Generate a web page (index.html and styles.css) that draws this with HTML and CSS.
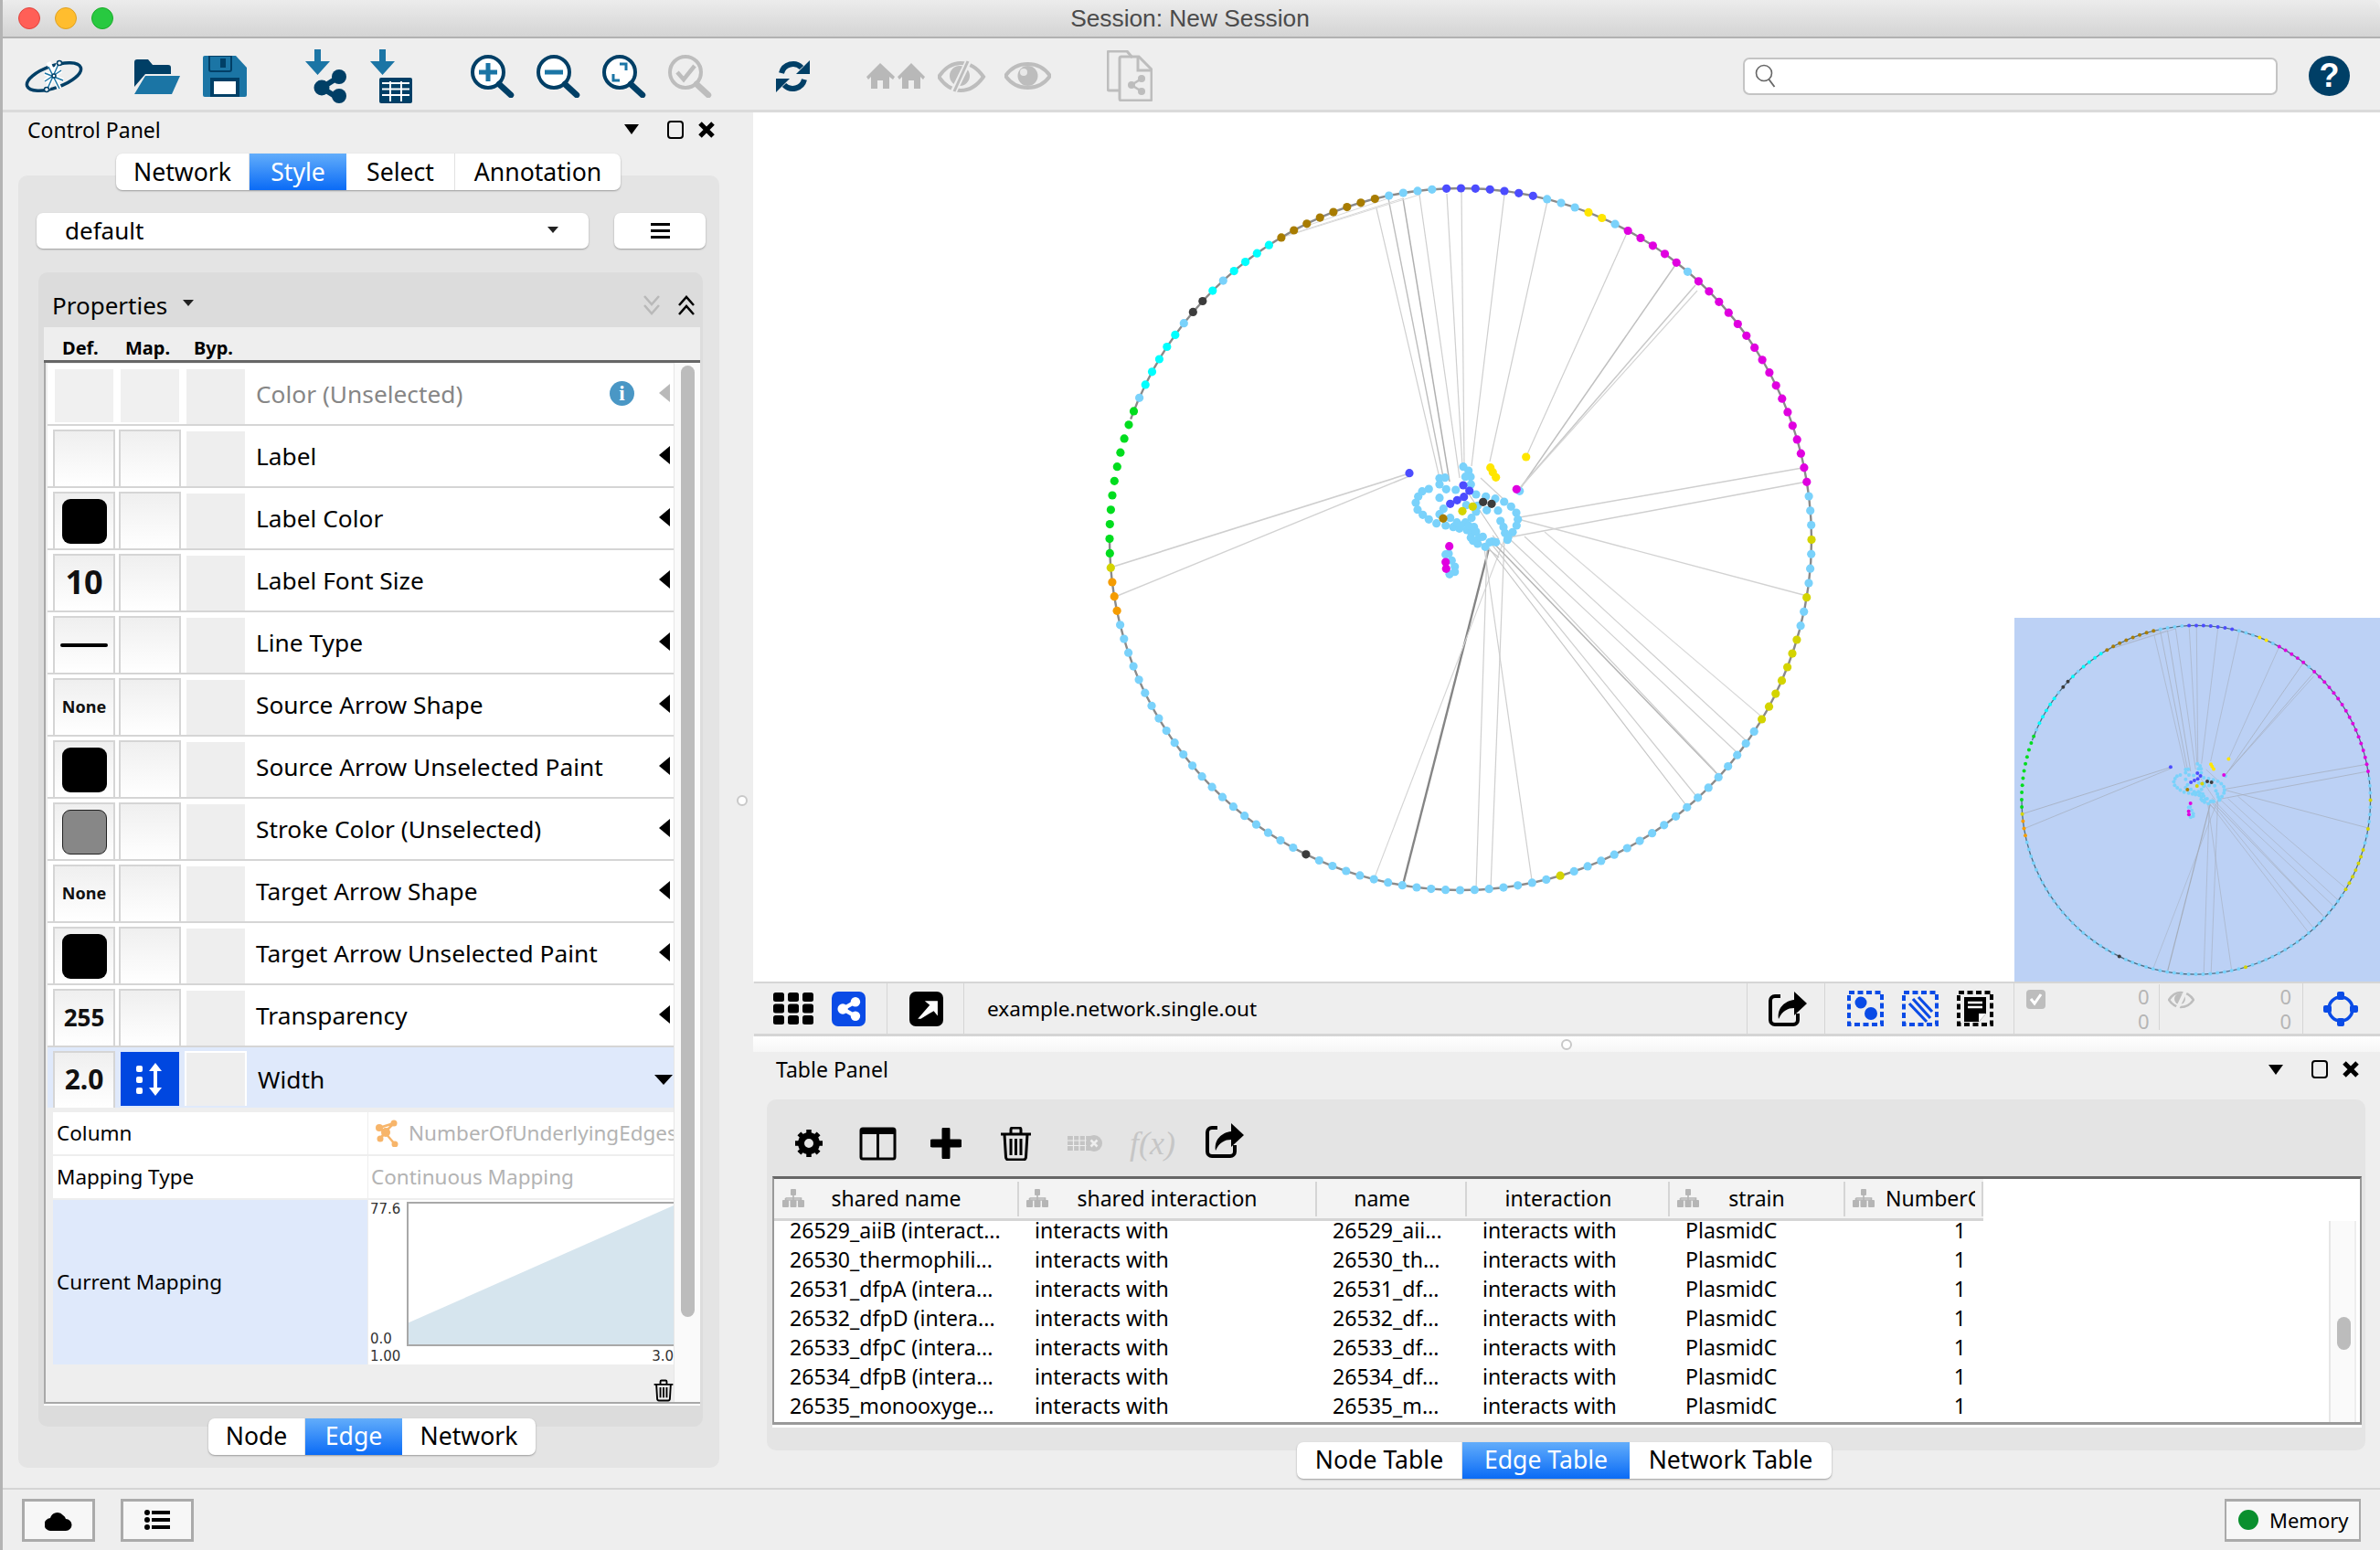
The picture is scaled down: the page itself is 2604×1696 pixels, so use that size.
FILE: index.html
```html
<!DOCTYPE html>
<html lang="en">
<head>
<meta charset="utf-8">
<title>Session: New Session</title>
<link rel="stylesheet" href="styles.css">
</head>
<body>
<svg class="defs" width="0" height="0" aria-hidden="true">
  <defs>
    <symbol id="i-export" viewBox="0 0 42 38">
      <path d="M13 5H7a5 5 0 0 0-5 5v21a5 5 0 0 0 5 5h20a5 5 0 0 0 5-5v-7" fill="none" stroke="#000" stroke-width="4"/>
      <path d="M11 30C9 18 18 10 28 9V0l14 13-14 13v-8C21 18 15 21 11 30Z" fill="#000"/>
    </symbol>
    <symbol id="i-share" viewBox="0 0 30 30">
      <path d="M23 6 7 15l16 9" fill="none" stroke="currentColor" stroke-width="5"/>
      <circle cx="23" cy="6" r="6" fill="currentColor"/><circle cx="7" cy="15" r="6.5" fill="currentColor"/><circle cx="23" cy="24" r="6" fill="currentColor"/>
    </symbol>
    <symbol id="i-tree" viewBox="0 0 24 20">
      <rect x="9" y="0" width="6" height="7" rx="1"/><path d="M12 7v5M3.5 12h17M3.5 10h17v2M3.5 10v3M20.5 10v3" stroke="#b5b5b5" stroke-width="1.6" fill="none"/>
      <rect x="0" y="12" width="7" height="8" rx="1"/><rect x="8.500" y="12" width="7" height="8" rx="1"/><rect x="17" y="12" width="7" height="8" rx="1"/>
    </symbol>
    <symbol id="i-win" viewBox="0 0 20 20"><rect x="2" y="1" width="16" height="18" rx="3" fill="none" stroke="#000" stroke-width="2"/></symbol>
    <symbol id="i-x" viewBox="0 0 20 20"><path d="M3 3l14 14M17 3 3 17" stroke="#000" stroke-width="5" fill="none"/></symbol>
    <symbol id="i-mag" viewBox="0 0 48 47">
      <circle cx="19" cy="19" r="17" fill="#fff" stroke="#003f66" stroke-width="4"/><path d="M31 32l13 12" stroke="#003f66" stroke-width="6.500" stroke-linecap="round"/>
    </symbol>
    <symbol id="i-trash" viewBox="0 0 35 37">
      <path d="M1 8h33M12 7V3a2 2 0 0 1 2-2h7a2 2 0 0 1 2 2v4M5 8l1.500 25a3 3 0 0 0 3 3h16a3 3 0 0 0 3-3L30 8M12 13v18M17.500 13v18M23 13v18" fill="none" stroke="#000" stroke-width="3"/>
    </symbol>
  </defs>
</svg>

<header class="titlebar">
  <div class="lights"><span class="light red"></span><span class="light amber"></span><span class="light green"></span></div>
  <div class="title">Session: New Session</div>
</header>

<nav class="toolbar">
  <svg class="ic-logo" viewBox="0 0 64 37"><ellipse cx="32" cy="19" rx="31" ry="12" transform="rotate(-19 32 19)" fill="none" stroke="#003f66" stroke-width="3.500"/><path d="M38 3 24 34M26 3l12 29M22 15l20 8M40 12 22 24" stroke="#fff" stroke-width="5" fill="none"/><path d="M38 3 24 34M26 8l12 24M22 15l20 8M40 12 22 24" stroke="#1b75a5" stroke-width="1.500" fill="none"/><g fill="#fff" stroke="#003f66" stroke-width="1.500"><circle cx="38" cy="4" r="2.500"/><circle cx="24" cy="33" r="2.500"/><circle cx="32" cy="18" r="2"/></g></svg>
  <div class="tgroup g-file">
    <svg class="ic-folder" viewBox="0 0 50 39"><path d="M0 4a3 3 0 0 1 3-3h12l5 6h17a3 3 0 0 1 3 3v7H12L0 31Z" fill="#003f66"/><path d="M12 19h38l-9 20H0Z" fill="#1b75a5"/></svg>
    <svg class="ic-save" viewBox="0 0 48 45"><path d="M2 0h34l12 13v30a2 2 0 0 1-2 2H2a2 2 0 0 1-2-2V2a2 2 0 0 1 2-2Z" fill="#1b75a5"/><path d="M7 0h24v15a2 2 0 0 1-2 2H9a2 2 0 0 1-2-2Z" fill="none" stroke="#003f66" stroke-width="2"/><rect x="19" y="3" width="6" height="10" fill="#003f66"/><rect x="8" y="24" width="32" height="21" fill="#003f66"/><rect x="12" y="28" width="24" height="14" fill="#fff"/></svg>
  </div>
  <div class="tgroup g-import">
    <svg class="ic-import" viewBox="0 0 46 59"><path d="M10 0h7v13h10L13.500 28 0 13h10Z" fill="#1b75a5"/><path d="M37 30 18 42l19 12" fill="none" stroke="#003f66" stroke-width="6"/><circle cx="37" cy="30" r="8" fill="#003f66"/><circle cx="18" cy="42" r="8.500" fill="#003f66"/><circle cx="37" cy="51" r="8" fill="#003f66"/></svg>
    <svg class="ic-import" viewBox="0 0 46 59"><path d="M10 0h7v13h10L13.500 28 0 13h10Z" fill="#1b75a5"/><rect x="10" y="31" width="36" height="28" rx="2" fill="#003f66"/><path d="M13 37h30M13 43.500h30M13 50h30M22 35v22M34 35v22" stroke="#fff" stroke-width="2" fill="none"/></svg>
  </div>
  <div class="tgroup g-zoom">
    <svg class="ic-mag"><use href="#i-mag"/><path d="M19 9v20M9 19h20" stroke="#1b75a5" stroke-width="5"/></svg>
    <svg class="ic-mag"><use href="#i-mag"/><path d="M9 19h20" stroke="#1b75a5" stroke-width="5"/></svg>
    <svg class="ic-mag"><use href="#i-mag"/><path d="M12 21v7h7M26 17v-7h-7" fill="none" stroke="#1b75a5" stroke-width="3"/></svg>
    <svg class="ic-mag" viewBox="0 0 48 47"><circle cx="19" cy="19" r="17" fill="none" stroke="#bdbdbd" stroke-width="4"/><path d="M31 32l13 12" stroke="#bdbdbd" stroke-width="6.500" stroke-linecap="round"/><path d="M10 19l7 8 12-15" fill="none" stroke="#bdbdbd" stroke-width="4.500"/></svg>
  </div>
  <svg class="ic-refresh" viewBox="0 0 37 35"><path d="M6 14A13 13 0 0 1 28 8" fill="none" stroke="#003f66" stroke-width="6"/><path d="M37 0v15H22Z" fill="#003f66"/><path d="M31 21A13 13 0 0 1 9 27" fill="none" stroke="#003f66" stroke-width="6"/><path d="M0 35V20h15Z" fill="#003f66"/></svg>
  <div class="tgroup g-vis">
    <svg class="ic-home" viewBox="0 0 64 28"><g fill="#b8b8b8"><path d="M15 0 31 15l-2 3-4-3v13h-7v-9h-6v9H5V15l-3 3-2-3Z"/><path d="M49 0 64 15l-2 3-3-3v13h-7v-9h-6v9h-7V15l-3 3-2-3Z"/></g></svg>
    <svg class="ic-hide" viewBox="0 0 59 35"><path d="M1 18C8 8 16 3 25 3s18 5 25 15c-7 10-16 15-25 15S8 28 1 18Z" fill="none" stroke="#bdbdbd" stroke-width="4"/><circle cx="24" cy="17" r="11" fill="#bdbdbd"/><path d="M34 0 17 35" stroke="#eee" stroke-width="7"/><path d="M33 1 18 34" stroke="#bdbdbd" stroke-width="3"/></svg>
    <svg class="ic-eye" viewBox="0 0 51 30"><path d="M1 15C8 5 16 2 25.500 2S43 5 50 15c-7 10-15 13-24.500 13S8 25 1 15Z" fill="none" stroke="#bdbdbd" stroke-width="4"/><circle cx="25.500" cy="15" r="11" fill="#bdbdbd"/><circle cx="21" cy="11" r="4" fill="#e8e8e8"/></svg>
  </div>
  <svg class="ic-doc" viewBox="0 0 50 56"><path d="M14 44H3a2 2 0 0 1-2-2V3a2 2 0 0 1 2-2h19l6 7" fill="none" stroke="#bdbdbd" stroke-width="3"/><path d="M14 9a2 2 0 0 1 2-2h19l14 14v32a2 2 0 0 1-2 2H16a2 2 0 0 1-2-2Z" fill="none" stroke="#bdbdbd" stroke-width="3"/><path d="M34 8v14h14" fill="none" stroke="#bdbdbd" stroke-width="3"/><path d="M38 31 27 38l11 7" fill="none" stroke="#bdbdbd" stroke-width="2.500"/><circle cx="38" cy="31" r="4" fill="#bdbdbd"/><circle cx="27" cy="38" r="4" fill="#bdbdbd"/><circle cx="38" cy="45" r="4" fill="#bdbdbd"/></svg>
  <div class="search"><svg class="ic-search" viewBox="0 0 24 26"><circle cx="10" cy="10" r="8.500" fill="none" stroke="#666" stroke-width="1.600"/><path d="M15.500 17l6 8" stroke="#666" stroke-width="1.800"/></svg></div>
  <div class="help">?</div>
</nav>

<main class="main">
  <section class="left">
    <div class="panel-head">
      <span class="panel-title">Control Panel</span>
      <span class="tri-down"></span>
      <svg class="win-ic"><use href="#i-win"/></svg>
      <svg class="win-x"><use href="#i-x"/></svg>
    </div>
    <div class="tabs tabs-top"><span class="tab t-network">Network</span><span class="tab active t-style">Style</span><span class="tab t-select">Select</span><span class="tab t-annot">Annotation</span></div>
    <div class="style-panel">
      <div class="style-top">
        <div class="combo"><span>default</span><span class="caret"></span></div>
        <div class="menu-btn"><span class="burger"></span></div>
      </div>
      <div class="props">
        <div class="props-head">
          <span class="props-title">Properties</span><span class="caret caret-props"></span>
          <svg class="chev chev-down" viewBox="0 0 20 24"><path d="M2 2l8 9 8-9M2 12l8 9 8-9" fill="none" stroke="#b9b9b9" stroke-width="2.500"/></svg>
          <svg class="chev chev-up" viewBox="0 0 20 24"><path d="M2 22l8-9 8 9M2 12l8-9 8 9" fill="none" stroke="#000" stroke-width="2.500"/></svg>
        </div>
        <div class="cols"><span class="col-def">Def.</span><span class="col-map">Map.</span><span class="col-byp">Byp.</span></div>
        <div class="props-body">
          <div class="rows">
            <div class="row row-off"><span class="cell off"></span><span class="cell off"></span><span class="cell byp off-byp"></span><span class="label dim">Color (Unselected)</span><span class="info">i</span><span class="arrow dimmed"></span></div>
            <div class="row"><span class="cell"></span><span class="cell"></span><span class="cell byp"></span><span class="label">Label</span><span class="arrow"></span></div>
            <div class="row"><span class="cell"><span class="swatch"></span></span><span class="cell"></span><span class="cell byp"></span><span class="label">Label Color</span><span class="arrow"></span></div>
            <div class="row"><span class="cell"><b class="v36">10</b></span><span class="cell"></span><span class="cell byp"></span><span class="label">Label Font Size</span><span class="arrow"></span></div>
            <div class="row"><span class="cell"><span class="line"></span></span><span class="cell"></span><span class="cell byp"></span><span class="label">Line Type</span><span class="arrow"></span></div>
            <div class="row"><span class="cell"><b class="v18">None</b></span><span class="cell"></span><span class="cell byp"></span><span class="label">Source Arrow Shape</span><span class="arrow"></span></div>
            <div class="row"><span class="cell"><span class="swatch"></span></span><span class="cell"></span><span class="cell byp"></span><span class="label">Source Arrow Unselected Paint</span><span class="arrow"></span></div>
            <div class="row"><span class="cell"><span class="swatch grey"></span></span><span class="cell"></span><span class="cell byp"></span><span class="label">Stroke Color (Unselected)</span><span class="arrow"></span></div>
            <div class="row"><span class="cell"><b class="v18">None</b></span><span class="cell"></span><span class="cell byp"></span><span class="label">Target Arrow Shape</span><span class="arrow"></span></div>
            <div class="row"><span class="cell"><span class="swatch"></span></span><span class="cell"></span><span class="cell byp"></span><span class="label">Target Arrow Unselected Paint</span><span class="arrow"></span></div>
            <div class="row"><span class="cell"><b class="v26">255</b></span><span class="cell"></span><span class="cell byp"></span><span class="label">Transparency</span><span class="arrow"></span></div>
            <div class="row row-sel"><span class="cell"><b class="v30">2.0</b></span><span class="cell cell-map"><svg class="ic-map" viewBox="0 0 30 36"><rect x="0" y="3" width="7" height="7" rx="2" fill="#fff"/><rect x="0" y="15" width="7" height="7" rx="2" fill="#fff"/><rect x="0" y="27" width="7" height="7" rx="2" fill="#fff"/><path d="M21 0l7 9h-5v18h5l-7 9-7-9h5V9h-5Z" fill="#fff"/></svg></span><span class="cell byp byp-sel"></span><span class="label">Width</span><span class="arrow-down"></span></div>
            <div class="detail">
              <div class="d-row"><div class="d-name">Column</div><div class="d-val"><svg class="ic-col" viewBox="0 0 26 30"><path d="M20 4 10 14 4 9M10 14l-5 7M10 14l11 13M4 9l16-5M5 21l6-7" stroke="#f7b56a" stroke-width="2.500" fill="none"/><circle cx="20" cy="4" r="3.500" fill="#f7b56a"/><circle cx="4" cy="9" r="4" fill="#f7b56a"/><circle cx="11" cy="14" r="5" fill="#f7b56a"/><circle cx="5" cy="21" r="3.500" fill="#f7b56a"/><circle cx="21" cy="27" r="3.500" fill="#f7b56a"/></svg><span class="clip">NumberOfUnderlyingEdges</span></div></div>
              <div class="d-row"><div class="d-name">Mapping Type</div><div class="d-val"><span class="plain">Continuous Mapping</span></div></div>
              <div class="d-row d-map">
                <div class="d-name d-cur">Current Mapping</div>
                <div class="chart">
                  <div class="chart-top">
                    <div class="axis"><span>77.6</span><span>0.0</span></div>
                    <svg class="plot" viewBox="0 0 290 156" preserveAspectRatio="none"><path d="M0 132 290 2V156H0Z" fill="#d6e5ee"/></svg>
                  </div>
                  <div class="axis-x"><span>1.00</span><span>3.0</span></div>
                </div>
              </div>
            </div>
            <div class="trash-row"><svg class="ic-trash-s"><use href="#i-trash"/></svg></div>
          </div>
          <div class="vscroll"><div class="thumb"></div></div>
        </div>
      </div>
      <div class="tabs tabs-low"><span class="tab t-node">Node</span><span class="tab active t-edge">Edge</span><span class="tab t-net2">Network</span></div>
    </div>
  </section>

  <div class="gutter"><span class="dot"></span></div>

  <section class="right">
    <div class="canvas">
      <svg class="net" viewBox="824 123 1780 951"><g id="net"></g></svg>
      <svg class="bird" viewBox="1198 189 805 801"><g id="net-bird"></g></svg>
    </div>
    <div class="netbar">
      <div class="nb nb-views">
        <svg class="ic-grid" viewBox="0 0 44 35"><g fill="#000"><rect width="12" height="10" rx="2.500"/><rect x="16" width="12" height="10" rx="2.500"/><rect x="32" width="12" height="10" rx="2.500"/><rect y="12.500" width="12" height="10" rx="2.500"/><rect x="16" y="12.500" width="12" height="10" rx="2.500"/><rect x="32" y="12.500" width="12" height="10" rx="2.500"/><rect y="25" width="12" height="10" rx="2.500"/><rect x="16" y="25" width="12" height="10" rx="2.500"/><rect x="32" y="25" width="12" height="10" rx="2.500"/></g></svg>
        <span class="sq-blue"><svg class="ic-share-w"><use href="#i-share"/></svg></span>
      </div>
      <div class="nb nb-open">
        <span class="sq-black"><svg class="ic-arrow" viewBox="0 0 24 24"><path d="M4 24 16 10l-5-4h13v15l-4-5L7 24Z" fill="#fff" transform="translate(-1 -2)"/></svg></span>
      </div>
      <div class="nb nb-name">example.network.single.out</div>
      <div class="nb nb-export"><svg class="ic-exp"><use href="#i-export"/></svg></div>
      <div class="nb nb-sel">
        <svg class="ic-sel" viewBox="0 0 40 39"><rect x="2" y="2" width="36" height="35" fill="none" stroke="#0a4be6" stroke-width="4" stroke-dasharray="6 3.500"/><circle cx="15" cy="13" r="6.500" fill="#0a4be6"/><circle cx="26" cy="25" r="7" fill="#0a4be6"/></svg>
        <svg class="ic-sel" viewBox="0 0 40 39"><rect x="2" y="2" width="36" height="35" fill="none" stroke="#0a4be6" stroke-width="4" stroke-dasharray="6 3.500"/><path d="M8 14l19 20M12 9l19 21M18 7l15 16" stroke="#0a4be6" stroke-width="3.200"/></svg>
        <svg class="ic-sel" viewBox="0 0 40 39"><rect x="2" y="2" width="36" height="35" fill="none" stroke="#000" stroke-width="4" stroke-dasharray="6 3.500"/><path d="M8 7h24v18l-8 9H8Z" fill="#000"/><path d="M12 13h16M12 18h16" stroke="#fff" stroke-width="2.500"/><path d="M24 34v-9h8" fill="#fff"/></svg>
      </div>
      <div class="nb nb-count">
        <div class="cnt"><svg class="ic-chk" viewBox="0 0 21 21"><rect width="21" height="21" rx="4" fill="#bdbdbd"/><path d="M5 10l4 5 7-10" fill="none" stroke="#fff" stroke-width="3"/></svg><div class="nums"><span>0</span><span>0</span></div></div>
        <div class="cnt cnt2"><svg class="ic-hide2" viewBox="0 0 29 21"><path d="M1 11C5 5 9 3 14 3s10 2 14 8c-4 6-9 8-14 8S5 17 1 11Z" fill="none" stroke="#bdbdbd" stroke-width="2.500"/><circle cx="13" cy="10" r="6" fill="#bdbdbd"/><path d="M20 0 10 21" stroke="#eee" stroke-width="4"/></svg><div class="nums"><span>0</span><span>0</span></div></div>
      </div>
      <div class="nb nb-fit"><svg class="ic-cross" viewBox="0 0 38 38"><circle cx="19" cy="19" r="13" fill="none" stroke="#0a4be6" stroke-width="3.500"/><g fill="#0a4be6"><rect x="15" y="0" width="8" height="9" rx="2"/><rect x="15" y="29" width="8" height="9" rx="2"/><rect x="0" y="15" width="9" height="8" rx="2"/><rect x="29" y="15" width="9" height="8" rx="2"/></g></svg></div>
    </div>
    <div class="hsplit"><span class="dot"></span></div>
    <div class="table-panel">
      <div class="panel-head head-table">
        <span class="panel-title">Table Panel</span>
        <span class="tri-down"></span>
        <svg class="win-ic"><use href="#i-win"/></svg>
        <svg class="win-x"><use href="#i-x"/></svg>
      </div>
      <div class="table-box">
        <div class="table-tools">
          <svg class="ic-gear" viewBox="0 0 30 30"><circle cx="15" cy="15" r="8.500" fill="none" stroke="#000" stroke-width="7"/><path d="M15 0v6M15 24v6M0 15h6M24 15h6M4.400 4.400l4 4M21.600 21.600l4 4M25.600 4.400l-4 4M8.400 21.600l-4 4" stroke="#000" stroke-width="5.500"/></svg>
          <svg class="ic-cols" viewBox="0 0 41 37"><rect x="2" y="2" width="37" height="33" rx="2" fill="none" stroke="#000" stroke-width="3"/><rect x="2" y="2" width="37" height="6" fill="#000"/><path d="M20.500 3v31" stroke="#000" stroke-width="3"/></svg>
          <svg class="ic-plus" viewBox="0 0 34 34"><path d="M17 2v30M2 17h30" stroke="#000" stroke-width="9" stroke-linecap="round"/></svg>
          <svg class="ic-trash"><use href="#i-trash"/></svg>
          <svg class="ic-tblx" viewBox="0 0 38 18"><rect x="0" y="1" width="26" height="16" fill="#c4c4c4"/><path d="M0 6h26M0 11.500h26M6.500 1v16M13 1v16M19.500 1v16" stroke="#eee" stroke-width="1.200"/><circle cx="29" cy="9" r="9" fill="#c4c4c4"/><path d="M25.500 5.500l7 7M32.500 5.500l-7 7" stroke="#eee" stroke-width="2.500"/></svg>
          <span class="fx">f(x)</span>
          <svg class="ic-exp"><use href="#i-export"/></svg>
        </div>
        <div class="table">
          <div class="t-inner">
            <div class="t-wrap">
              <div class="thead">
                <div class="th c1"><svg class="tree"><use href="#i-tree"/></svg><span>shared name</span></div>
                <div class="th c2"><svg class="tree"><use href="#i-tree"/></svg><span>shared interaction</span></div>
                <div class="th c3 th-plain"><span>name</span></div>
                <div class="th c4 th-plain"><span>interaction</span></div>
                <div class="th c5"><svg class="tree"><use href="#i-tree"/></svg><span>strain</span></div>
                <div class="th c6"><svg class="tree"><use href="#i-tree"/></svg><span class="th-num">NumberC</span></div>
              </div>
              <div class="tr"><span class="c1">26529_aiiB (interact...</span><span class="c2">interacts with</span><span class="c3">26529_aii...</span><span class="c4">interacts with</span><span class="c5">PlasmidC</span><span class="c6">1</span></div>
              <div class="tr"><span class="c1">26530_thermophili...</span><span class="c2">interacts with</span><span class="c3">26530_th...</span><span class="c4">interacts with</span><span class="c5">PlasmidC</span><span class="c6">1</span></div>
              <div class="tr"><span class="c1">26531_dfpA (intera...</span><span class="c2">interacts with</span><span class="c3">26531_df...</span><span class="c4">interacts with</span><span class="c5">PlasmidC</span><span class="c6">1</span></div>
              <div class="tr"><span class="c1">26532_dfpD (intera...</span><span class="c2">interacts with</span><span class="c3">26532_df...</span><span class="c4">interacts with</span><span class="c5">PlasmidC</span><span class="c6">1</span></div>
              <div class="tr"><span class="c1">26533_dfpC (intera...</span><span class="c2">interacts with</span><span class="c3">26533_df...</span><span class="c4">interacts with</span><span class="c5">PlasmidC</span><span class="c6">1</span></div>
              <div class="tr"><span class="c1">26534_dfpB (intera...</span><span class="c2">interacts with</span><span class="c3">26534_df...</span><span class="c4">interacts with</span><span class="c5">PlasmidC</span><span class="c6">1</span></div>
              <div class="tr"><span class="c1">26535_monooxyge...</span><span class="c2">interacts with</span><span class="c3">26535_m...</span><span class="c4">interacts with</span><span class="c5">PlasmidC</span><span class="c6">1</span></div>
            </div>
            <div class="t-scroll"><div class="t-thumb"></div></div>
          </div>
        </div>
      </div>
      <div class="tabs tabs-table"><span class="tab t-nt">Node Table</span><span class="tab active t-et">Edge Table</span><span class="tab t-wt">Network Table</span></div>
    </div>
  </section>
</main>

<footer class="status">
  <div class="sbtn"><svg class="ic-cloud" viewBox="0 0 30 24"><path d="M7 24a7 7 0 0 1-1-14A8 8 0 0 1 20 7a6 6 0 0 1 3 4 6.500 6.500 0 0 1 0 13Z" fill="#000"/></svg></div>
  <div class="sbtn"><svg class="ic-list" viewBox="0 0 28 22"><circle cx="3" cy="3" r="3"/><circle cx="3" cy="11" r="3"/><circle cx="3" cy="19" r="3"/><rect x="8" y="1" width="20" height="4"/><rect x="8" y="9" width="20" height="4"/><rect x="8" y="17" width="20" height="4"/></svg></div>
  <div class="mem"><span class="mem-dot"></span>Memory</div>
</footer>
<script src="app.js"></script>
</body>
</html>
```

FILE: styles.css
```css
* { box-sizing: border-box; }
html, body { margin: 0; height: 100%; }
body {
  width: 2604px; height: 1696px; overflow: hidden;
  display: flex; flex-direction: column;
  background: #eee; color: #000;
  font-family: "Noto Sans", "DejaVu Sans", sans-serif; font-size: 24px;
  border-left: 3px solid #b4b4b4;
}
.defs { position: absolute; }
svg { display: block; flex: none; }

.titlebar {
  height: 42px; flex: none; display: flex; align-items: center; position: relative; margin-left: -3px;
  background: linear-gradient(#ececec, #d4d4d4); border-bottom: 2px solid #b1b1b1; border-radius: 10px 10px 0 0;
}
.lights { display: flex; gap: 16px; padding-left: 20px; }
.light { width: 24px; height: 24px; border-radius: 50%; }
.red { background: #ff5f57; border: 1px solid #e0443e; }
.amber { background: #ffbd2e; border: 1px solid #dea123; }
.green { background: #28c940; border: 1px solid #1aab29; }
.title { position: absolute; left: 0; right: 0; text-align: center; font: 26.3px "Liberation Sans", sans-serif; color: #4b4b4b; }

.toolbar {
  height: 81px; flex: none; display: flex; align-items: center; padding: 4px 33px 0 24px;
  background: #eee; border-bottom: 3px solid #dadada;
}
.tgroup { display: flex; align-items: center; }
.ic-logo { width: 64px; height: 37px; }
.g-file { margin-left: 56px; gap: 25px; }
.ic-folder { width: 50px; height: 39px; }
.ic-save { width: 48px; height: 45px; }
.g-import { margin-left: 64px; gap: 25px; }
.ic-import { width: 46px; height: 59px; }
.g-zoom { margin-left: 64px; gap: 24px; }
.ic-mag { width: 48px; height: 47px; }
.ic-refresh { width: 37px; height: 35px; margin-left: 70px; }
.g-vis { margin-left: 62px; gap: 14px; }
.ic-home { width: 64px; height: 28px; }
.ic-hide { width: 59px; height: 35px; }
.ic-eye { width: 51px; height: 30px; }
.ic-doc { width: 50px; height: 56px; margin-left: 61px; }
.search {
  margin-left: auto; width: 585px; height: 41px; background: #fff; border: 2px solid #c4c4c4; border-radius: 7px;
  display: flex; align-items: center; padding-left: 11px;
}
.ic-search { width: 24px; height: 26px; }
.help {
  margin-left: 34px; width: 45px; height: 44px; border-radius: 50%; background: #003f66; color: #fff;
  font: bold 36px/44px "Liberation Sans", sans-serif; text-align: center;
}

.main { flex: 1; display: flex; min-height: 0; }
.left { width: 812px; flex: none; display: flex; flex-direction: column; }
.gutter { width: 9px; flex: none; display: flex; align-items: center; }
.gutter .dot { margin-left: -9px; position: relative; }
.dot { width: 12px; height: 12px; border-radius: 50%; background: #fff; border: 2px solid #c8c8c8; flex: none; }

.panel-head { height: 45px; flex: none; display: flex; align-items: center; padding: 0 32px 8px 27px; }
.panel-title { font-size: 23px; }
.tri-down { margin-left: auto; width: 0; height: 0; border: 8px solid transparent; border-top: 11px solid #000; border-bottom: 0; }
.win-ic { width: 20px; height: 20px; margin-left: 30px; }
.win-x { width: 20px; height: 20px; margin-left: 14px; }

.tabs { display: flex; justify-content: center; align-self: center; position: relative; z-index: 1; height: 40px; flex: none; background: #fff; border-radius: 7px; box-shadow: 0 1px 2px #9a9a9a; overflow: hidden; }
.tabs-top { margin-right: 12px; }
.tab { display: flex; align-items: center; justify-content: center; font-size: 26.6px; border-right: 1px solid #e2e2e2; }
.tab:last-child { border-right: 0; }
.tab.active { color: #fff; background: linear-gradient(#62adfb, #0a6bf6); border-right: 0; }
.t-network { width: 146px; } .t-style { width: 106px; } .t-select { width: 119px; } .t-annot { width: 181px; }
.t-node { width: 106px; } .t-edge { width: 106px; } .t-net2 { width: 146px; }
.t-nt { width: 181px; } .t-et { width: 183px; } .t-wt { width: 221px; }

.style-panel {
  margin: -16px 28px 22px 17px; flex: 1; background: #e4e4e4; border-radius: 10px; padding: 41px 0 14px 0;
  display: flex; flex-direction: column;
}
.style-top { display: flex; padding: 0 15px 0 20px; height: 39px; flex: none; gap: 28px; }
.combo {
  width: 604px; background: #fff; border-radius: 7px; box-shadow: 0 1px 2px #9a9a9a; display: flex; align-items: center;
  justify-content: space-between; padding: 0 33px 2px 31px; font-size: 26px;
}
.caret { width: 0; height: 0; border: 6px solid transparent; border-top: 7px solid #222; border-bottom: 0; }
.menu-btn { width: 100px; background: #fff; border-radius: 7px; box-shadow: 0 1px 2px #9a9a9a; display: flex; align-items: center; justify-content: center; }
.burger { width: 21px; height: 17px; border-top: 3.500px solid #000; border-bottom: 3.500px solid #000; position: relative; display: flex; align-items: center; }
.burger::before { content: ""; width: 100%; height: 3.500px; background: #000; }

.props { margin: 26px 18px 0 22px; flex: 1; background: #dcdcdc; border-radius: 10px; padding: 0 3px 25px 6px; display: flex; flex-direction: column; min-height: 0; }
.props-head { height: 60px; flex: none; display: flex; align-items: center; padding: 11px 5px 0 9px; }
.props-title { font-size: 26px; }
.caret-props { margin-left: 17px; margin-bottom: 4px; }
.chev { width: 20px; height: 24px; }
.chev-down { margin-left: auto; }
.chev-up { margin-left: 18px; }
.cols { height: 39px; flex: none; background: #eee; border-bottom: 3px solid #666; display: flex; align-items: center; padding-top: 8px; font-weight: 700; font-size: 20px; }
.col-def { margin-left: 20px; width: 69px; } .col-map { width: 75px; }
.props-body { flex: 1; display: flex; border-left: 2px solid #a8a8a8; border-bottom: 2px solid #a8a8a8; box-shadow: 0 2px 0 #fff; min-height: 0; background: #fff; }
.rows { width: 687px; flex: none; padding-left: 2px; background: #eee; display: flex; flex-direction: column; padding-top: 1px; }
.row { height: 68px; flex: none; display: flex; padding: 4px 0 0 6px; background: #fff; border-bottom: 2px solid #d5d5d5; align-items: flex-start; }
.cell {
  width: 68px; height: 62px; flex: none; margin-right: 4px; border: 2px solid #d5d5d5; border-bottom: 0;
  background: linear-gradient(#efefef, #fff); display: flex; align-items: center; justify-content: center;
}
.byp { width: 64px; margin: 2px 0 0 2px; height: 60px; border: 0; background: #eee; }
.off { border: 0; background: #f0f0f0; margin: 2px 6px 0 2px; width: 64px; height: 58px; flex: none; }
.off-byp { margin: 2px 0 0 2px; }
.label { margin-left: 12px; font-size: 26.3px; align-self: center; line-height: 1; margin-top: -3px; }
.dim { color: #868686; }
.info { margin-left: auto; margin-right: 27px; width: 27px; height: 27px; border-radius: 50%; background: #4a97c5; color: #fff; font: bold 23px/27px "Liberation Serif", serif; text-align: center; align-self: center; margin-top: -6px; }
.arrow { margin-left: auto; margin-right: 4px; width: 0; height: 0; border: 10px solid transparent; border-right: 12px solid #000; border-left: 0; align-self: center; margin-top: -6px; }
.info + .arrow { margin-left: 0; }
.arrow.dimmed { border-right-color: #b9b9b9; }
.arrow-down { margin-left: auto; margin-right: 1px; width: 0; height: 0; border: 10px solid transparent; border-top: 11px solid #000; border-bottom: 0; align-self: center; }
.swatch { width: 49px; height: 49px; border-radius: 9px; background: #000; }
.swatch.grey { background: #878787; border: 1.500px solid #222; }
.line { width: 52px; height: 4px; border-radius: 2px; background: #000; }
.cell b { font-family: "Noto Sans", sans-serif; color: #111; line-height: 1; margin-top: -3px; }
.v36 { font-size: 36px; } .v30 { font-size: 30px; } .v26 { font-size: 26px; } .v18 { font-size: 18px; }
.row-sel { height: 66px; background: #dfe9fb; border-bottom: 0; padding-top: 4px; }
.row-sel .label { margin-top: 0; }
.cell-map { background: #0047e0; border: 0; width: 64px; height: 59px; margin: 1px 6px 0 2px; }
.ic-map { width: 30px; height: 36px; }
.byp-sel { border: 2px solid #fff; border-bottom: 0; width: 68px; height: 60px; margin: 0; }
.detail { padding: 5px 0 0 6px; display: flex; flex-direction: column; gap: 2px; background: #eee; }
.d-row { display: flex; height: 46px; gap: 1px; }
.d-name { width: 344px; flex: none; background: #fff; padding: 0 0 2px 4px; font-size: 22.5px; display: flex; align-items: center; }
.d-val { flex: 1; min-width: 0; background: #fff; display: flex; align-items: center; overflow: hidden; color: #b3b3b3; font-size: 22.5px; white-space: nowrap; padding-bottom: 1px; }
.ic-col { width: 26px; height: 30px; margin: 0 10px 0 8px; }
.plain { margin-left: 3px; }
.d-map { height: 180px; }
.d-cur { background: #dfe9fb; }
.chart { flex: 1; min-width: 0; background: #fff; display: flex; flex-direction: column; padding: 2px 0 0 2px; }
.chart-top { display: flex; height: 158px; flex: none; }
.axis { width: 40px; flex: none; display: flex; flex-direction: column; justify-content: space-between; font: 15px/16px "DejaVu Sans", sans-serif; color: #333; }
.plot { width: 292px; height: 158px; border: 2px solid #a8a8a8; border-right: 0; }
.axis-x { display: flex; justify-content: space-between; font: 15px/18px "DejaVu Sans", sans-serif; color: #333; overflow: hidden; padding-top: 2px; }
.trash-row { flex: 1; display: flex; justify-content: flex-end; align-items: flex-end; }
.ic-trash-s { width: 22px; height: 25px; }
.vscroll { flex: 1; background: #fafafa; border-left: 1px solid #e6e6e6; padding: 3px 6px 0 7px; }
.thumb { height: 1041px; background: #bcbcbc; border-radius: 8px; }
.tabs-low { margin-top: -9px; margin-left: 7px; }
.tabs-low .tab, .tabs-table .tab { padding-bottom: 3px; }

.right { flex: 1; min-width: 0; display: flex; flex-direction: column; }
.canvas { height: 951px; flex: none; background: #fff; position: relative; overflow: hidden; }
.net { width: 1780px; height: 951px; }
.bird { position: absolute; right: 0; bottom: 0; width: 400px; height: 398px; background: #bcd1f5; }

.netbar { height: 60px; flex: none; display: flex; border-top: 2px solid #d5d5d5; border-bottom: 3px solid #d5d5d5; background: #eee; margin-left: 1px; }
.nb { display: flex; align-items: center; border-right: 1px solid #d5d5d5; }
.nb-views { width: 146px; gap: 20px; padding-left: 21px; }
.ic-grid { width: 44px; height: 35px; }
.sq-blue { width: 37px; height: 38px; background: #0a4be6; border-radius: 7px; color: #fff; display: flex; align-items: center; justify-content: center; }
.ic-share-w { width: 26px; height: 26px; }
.nb-open { width: 84px; padding-left: 24px; }
.sq-black { width: 37px; height: 38px; background: #000; border-radius: 7px; display: flex; align-items: center; justify-content: center; }
.ic-arrow { width: 26px; height: 26px; }
.nb-name { width: 857px; padding-left: 25px; font-size: 22.6px; }
.nb-export { width: 85px; padding-left: 23px; }
.ic-exp { width: 42px; height: 38px; }
.nb-sel { width: 207px; padding-left: 24px; gap: 20px; }
.ic-sel { width: 40px; height: 39px; }
.nb-count { width: 316px; align-items: flex-start; color: #b5b5b5; padding-top: 1px; }
.cnt { display: flex; width: 158px; padding-left: 13px; height: 50px; }
.cnt2 { border-left: 1px solid #d5d5d5; padding-left: 9px; }
.ic-chk { width: 21px; height: 21px; margin-top: 6px; }
.ic-hide2 { width: 29px; height: 21px; margin-top: 6px; }
.nums { margin-left: auto; padding-right: 10px; display: flex; flex-direction: column; font-size: 22px; line-height: 27px; }
.cnt2 .nums { padding-right: 12px; }
.nb-fit { flex: 1; border-right: 0; padding-left: 22px; }
.ic-cross { width: 38px; height: 38px; }

.hsplit { height: 17px; flex: none; background: linear-gradient(#fff, #f6f6f6); display: flex; align-items: center; justify-content: center; }
.table-panel { flex: 1; display: flex; flex-direction: column; background: #eee; min-height: 0; }
.head-table { height: 52px; padding: 0 22px 14px 25px; }
.head-table .win-x { margin-left: 14px; }
.table-box { margin: 0 16px 0 15px; height: 384px; flex: none; background: #e4e4e4; border-radius: 10px; display: flex; flex-direction: column; padding: 0 4px 28px 6px; }
.table-tools { height: 84px; flex: none; display: flex; align-items: center; padding: 12px 0 0 25px; }
.ic-gear { width: 30px; height: 30px; }
.ic-cols { width: 41px; height: 37px; margin-left: 40px; }
.ic-plus { width: 34px; height: 34px; margin-left: 37px; }
.ic-trash { width: 35px; height: 37px; margin-left: 42px; }
.ic-tblx { width: 38px; height: 18px; margin-left: 39px; }
.fx { margin-left: 30px; width: 58px; font: italic 36px/1 "Liberation Serif", serif; color: #c6c6c6; }
.table-tools .ic-exp { margin-left: 25px; margin-top: -6px; }
.table { flex: 1; background: #fff; border: 2px solid #999; border-top: 3px solid #666; border-bottom: 3px solid #999; box-shadow: 0 3px 0 #fff; min-height: 0; }
.t-inner { display: flex; height: 100%; justify-content: space-between; overflow: hidden; }
.t-wrap { width: 1323px; flex: none; }
.thead { display: flex; height: 46px; background: #f3f3f3; border-bottom: 3px solid #d5d5d5; padding-left: 1px; margin-bottom: -5px; position: relative; }
.th { font-size: 23px; position: relative; display: flex; align-items: center; justify-content: center; border-right: 2px solid #d5d5d5; margin: 3px 0 2px; padding-bottom: 2px; }
.th-plain { padding-right: 20px; }
.th-num { margin-left: 12px; overflow: hidden; white-space: nowrap; width: 98px; flex: none; }
.tree { width: 24px; height: 20px; fill: #b5b5b5; position: absolute; left: 8px; }
.c6 .tree { position: static; flex: none; margin-left: 8px; }
.c6.th { justify-content: flex-start; }
.c1 { width: 267px; flex: none; } .c2 { width: 326px; flex: none; } .c3 { width: 164px; flex: none; }
.c4 { width: 222px; flex: none; } .c5 { width: 192px; flex: none; } .c6 { width: 151px; flex: none; }
.tr { display: flex; height: 32px; align-items: center; font-size: 23.1px; line-height: 1; white-space: nowrap; padding-left: 1px; }
.tr span { padding-left: 17px; }
.tr .c1 { padding-left: 16px; }
.tr .c6 { text-align: right; padding-right: 19px; }
.t-scroll { width: 30px; flex: none; margin: 46px 4px 0 0; background: #fafafa; border-left: 2px solid #e6e6e6; border-right: 2px solid #eee; padding: 105px 4px 0 7px; }
.t-thumb { height: 36px; background: #bcbcbc; border-radius: 8px; }
.tabs-table { margin-top: -9px; margin-right: 5px; }

.status { height: 68px; flex: none; display: flex; align-items: center; gap: 28px; padding: 0 21px 0 21px; border-top: 2px solid #d5d5d5; background: #eee; }
.sbtn { width: 80px; height: 47px; background: #f7f7f7; border: 3px solid #aaa; display: flex; align-items: center; justify-content: center; }
.ic-cloud { width: 30px; height: 24px; }
.ic-list { width: 28px; height: 22px; }
.mem { margin-left: auto; width: 149px; height: 47px; background: #f7f7f7; border: 2px solid #aaa; border-top-width: 3px; border-bottom-width: 3px; display: flex; align-items: center; padding-left: 13px; gap: 12px; font-size: 22px; }
.mem-dot { width: 22px; height: 22px; border-radius: 50%; background: #0a8f2e; flex: none; }
```

FILE: app.js
```js
// Draws the circular network layout from its node colour runs and edge list.
var NS = "http://www.w3.org/2000/svg";
var CX = 1598, CY = 590, R = 384;
var C = { l: "#7ad2fb", b: "#4c4cff", m: "#e000e0", y: "#ffe600", g: "#00dd1e", c: "#00ffff",
          r: "#a87c00", o: "#f59c00", k: "#3c3c3c", v: "#d4d400" };
var runs = [["b",7],["l",3],["y",2],["l",1],["m",5],["l",1],["m",17],["l",3],["v",1],["l",3],["v",1],["l",2],["v",7],
            ["l",17],["v",1],["l",17],["k",1],["l",21],["o",3],["v",1],["g",11],["l",1],["c",5],["l",1],["k",2],["c",1],
            ["l",1],["c",4],["r",8],["l",4]];
var inner = {
  l: "453,152 470,165 477,185 460,185 478,210 375,190 393,188 375,210 397,226 428,228 375,254 340,225 318,233 305,250 297,270 303,293 320,310 340,325 365,338 395,345 420,350 440,355 465,360 480,370 478,385 500,405 517,382 525,415 540,400 598,392 590,370 585,350 575,330 567,296 530,295 500,280 495,243 527,250 558,257 587,267 610,283 627,303 632,325 628,345 615,367 600,385 463,278 375,308 410,320 432,335 460,335 480,320 495,300 388,290 405,437 415,460 425,480 425,497 408,505 395,440 638,232 445,345 470,345 488,350 495,365 505,385 485,395 548,398 560,400",
  k: "518,268 546,274",
  b: "276,173 453,213 473,231 455,251 433,262 410,274",
  y: "542,155 550,170 560,187 659,120",
  v: "450,298 484,283",
  r: "387,322",
  m: "407,413 395,465 397,487 628,226"
};
// x1 y1 x2 y2 width colour
var edges = [
  [1506,228,1575,523,1.2,"#cfcfcf"],[1519,217,1580,527,1.4,"#bdbdbd"],[1535,217,1586,527,1.5,"#b0b0b0"],[1553,213,1597,523,1.2,"#cfcfcf"],
  [1583,212,1600,510,1.2,"#cfcfcf"],[1599,208,1602,508,1.2,"#cfcfcf"],[1646,213,1610,510,1.2,"#cfcfcf"],[1693,220,1630,505,1.2,"#cfcfcf"],
  [1780,255,1671,497,1.2,"#cfcfcf"],[1833,290,1663,535,1.5,"#c0c0c0"],[1855,312,1662,535,1.5,"#c8c8c8"],[1857,318,1660,537,1.2,"#d4d4d4"],
  [1402,260,1553,213,1,"#d8d8d8"],[1416,255,1535,217,1,"#d8d8d8"],[1430,247,1519,217,1,"#d8d8d8"],
  [1542,518,1215,621,1.6,"#cfcfcf"],[1542,521,1220,653,1.4,"#d2d2d2"],
  [1972,512,1663,566,1.5,"#cfcfcf"],[1977,527,1651,588,1.5,"#cfcfcf"],[1657,567,1977,652,1.4,"#d2d2d2"],
  [1535,968,1629,600,2.4,"#858585"],[1504,960,1646,590,1.1,"#d4d4d4"],[1615,973,1627,600,1.2,"#cfcfcf"],[1631,973,1646,590,1.2,"#cfcfcf"],[1676,963,1624,600,1.2,"#cfcfcf"],
  [1844,880,1627,597,1.2,"#c6c6c6"],[1855,870,1630,593,1.2,"#cfcfcf"],[1879,847,1630,590,1.5,"#b5b5b5"],[1876,843,1633,586,1.2,"#cfcfcf"],
  [1899,822,1652,590,1.2,"#cfcfcf"],[1910,810,1668,587,1.2,"#cfcfcf"],[1926,783,1690,582,1.2,"#d8d8d8"],
  [1620,523,1660,560,1.2,"#cfcfcf"],[1600,530,1640,590,1.2,"#c8c8c8"],[1590,570,1640,610,1.2,"#c8c8c8"]
];
function draw(id, opt) {
  var g = document.getElementById(id);
  function el(name, attrs) {
    var e = document.createElementNS(NS, name);
    for (var k in attrs) e.setAttribute(k, attrs[k]);
    g.appendChild(e);
  }
  edges.forEach(function (d) {
    el("line", { x1: d[0], y1: d[1], x2: d[2], y2: d[3], "stroke-width": d[4] * opt.edgeScale, stroke: opt.edge || d[5] });
  });
  el("circle", { cx: CX, cy: CY, r: R, fill: "none", stroke: opt.ring, "stroke-width": opt.ringWidth, pathLength: 360, "stroke-dasharray": "255 20 85", transform: "rotate(-75 " + CX + " " + CY + ")" });
  var i = 0;
  runs.forEach(function (run) {
    for (var n = 0; n < run[1]; n++, i++) {
      var a = (-2.3 + i * 2.3685) * Math.PI / 180;
      el("circle", { cx: (CX + R * Math.sin(a)).toFixed(1), cy: (CY - R * Math.cos(a)).toFixed(1), r: opt.r, fill: C[run[0]] });
    }
  });
  Object.keys(inner).forEach(function (key) {
    inner[key].split(" ").forEach(function (p) {
      var xy = p.split(",");
      el("circle", { cx: (1450 + xy[0] / 3).toFixed(1), cy: (460 + xy[1] / 3).toFixed(1), r: opt.r, fill: C[key] });
    });
  });
}
draw("net", { edgeScale: 1, ring: "#8a8a8a", ringWidth: 2.4, r: 4.6 });
draw("net-bird", { edgeScale: 1, edge: "#a4adbc", ring: "#4c6f86", ringWidth: 2.6, r: 4 });
```
